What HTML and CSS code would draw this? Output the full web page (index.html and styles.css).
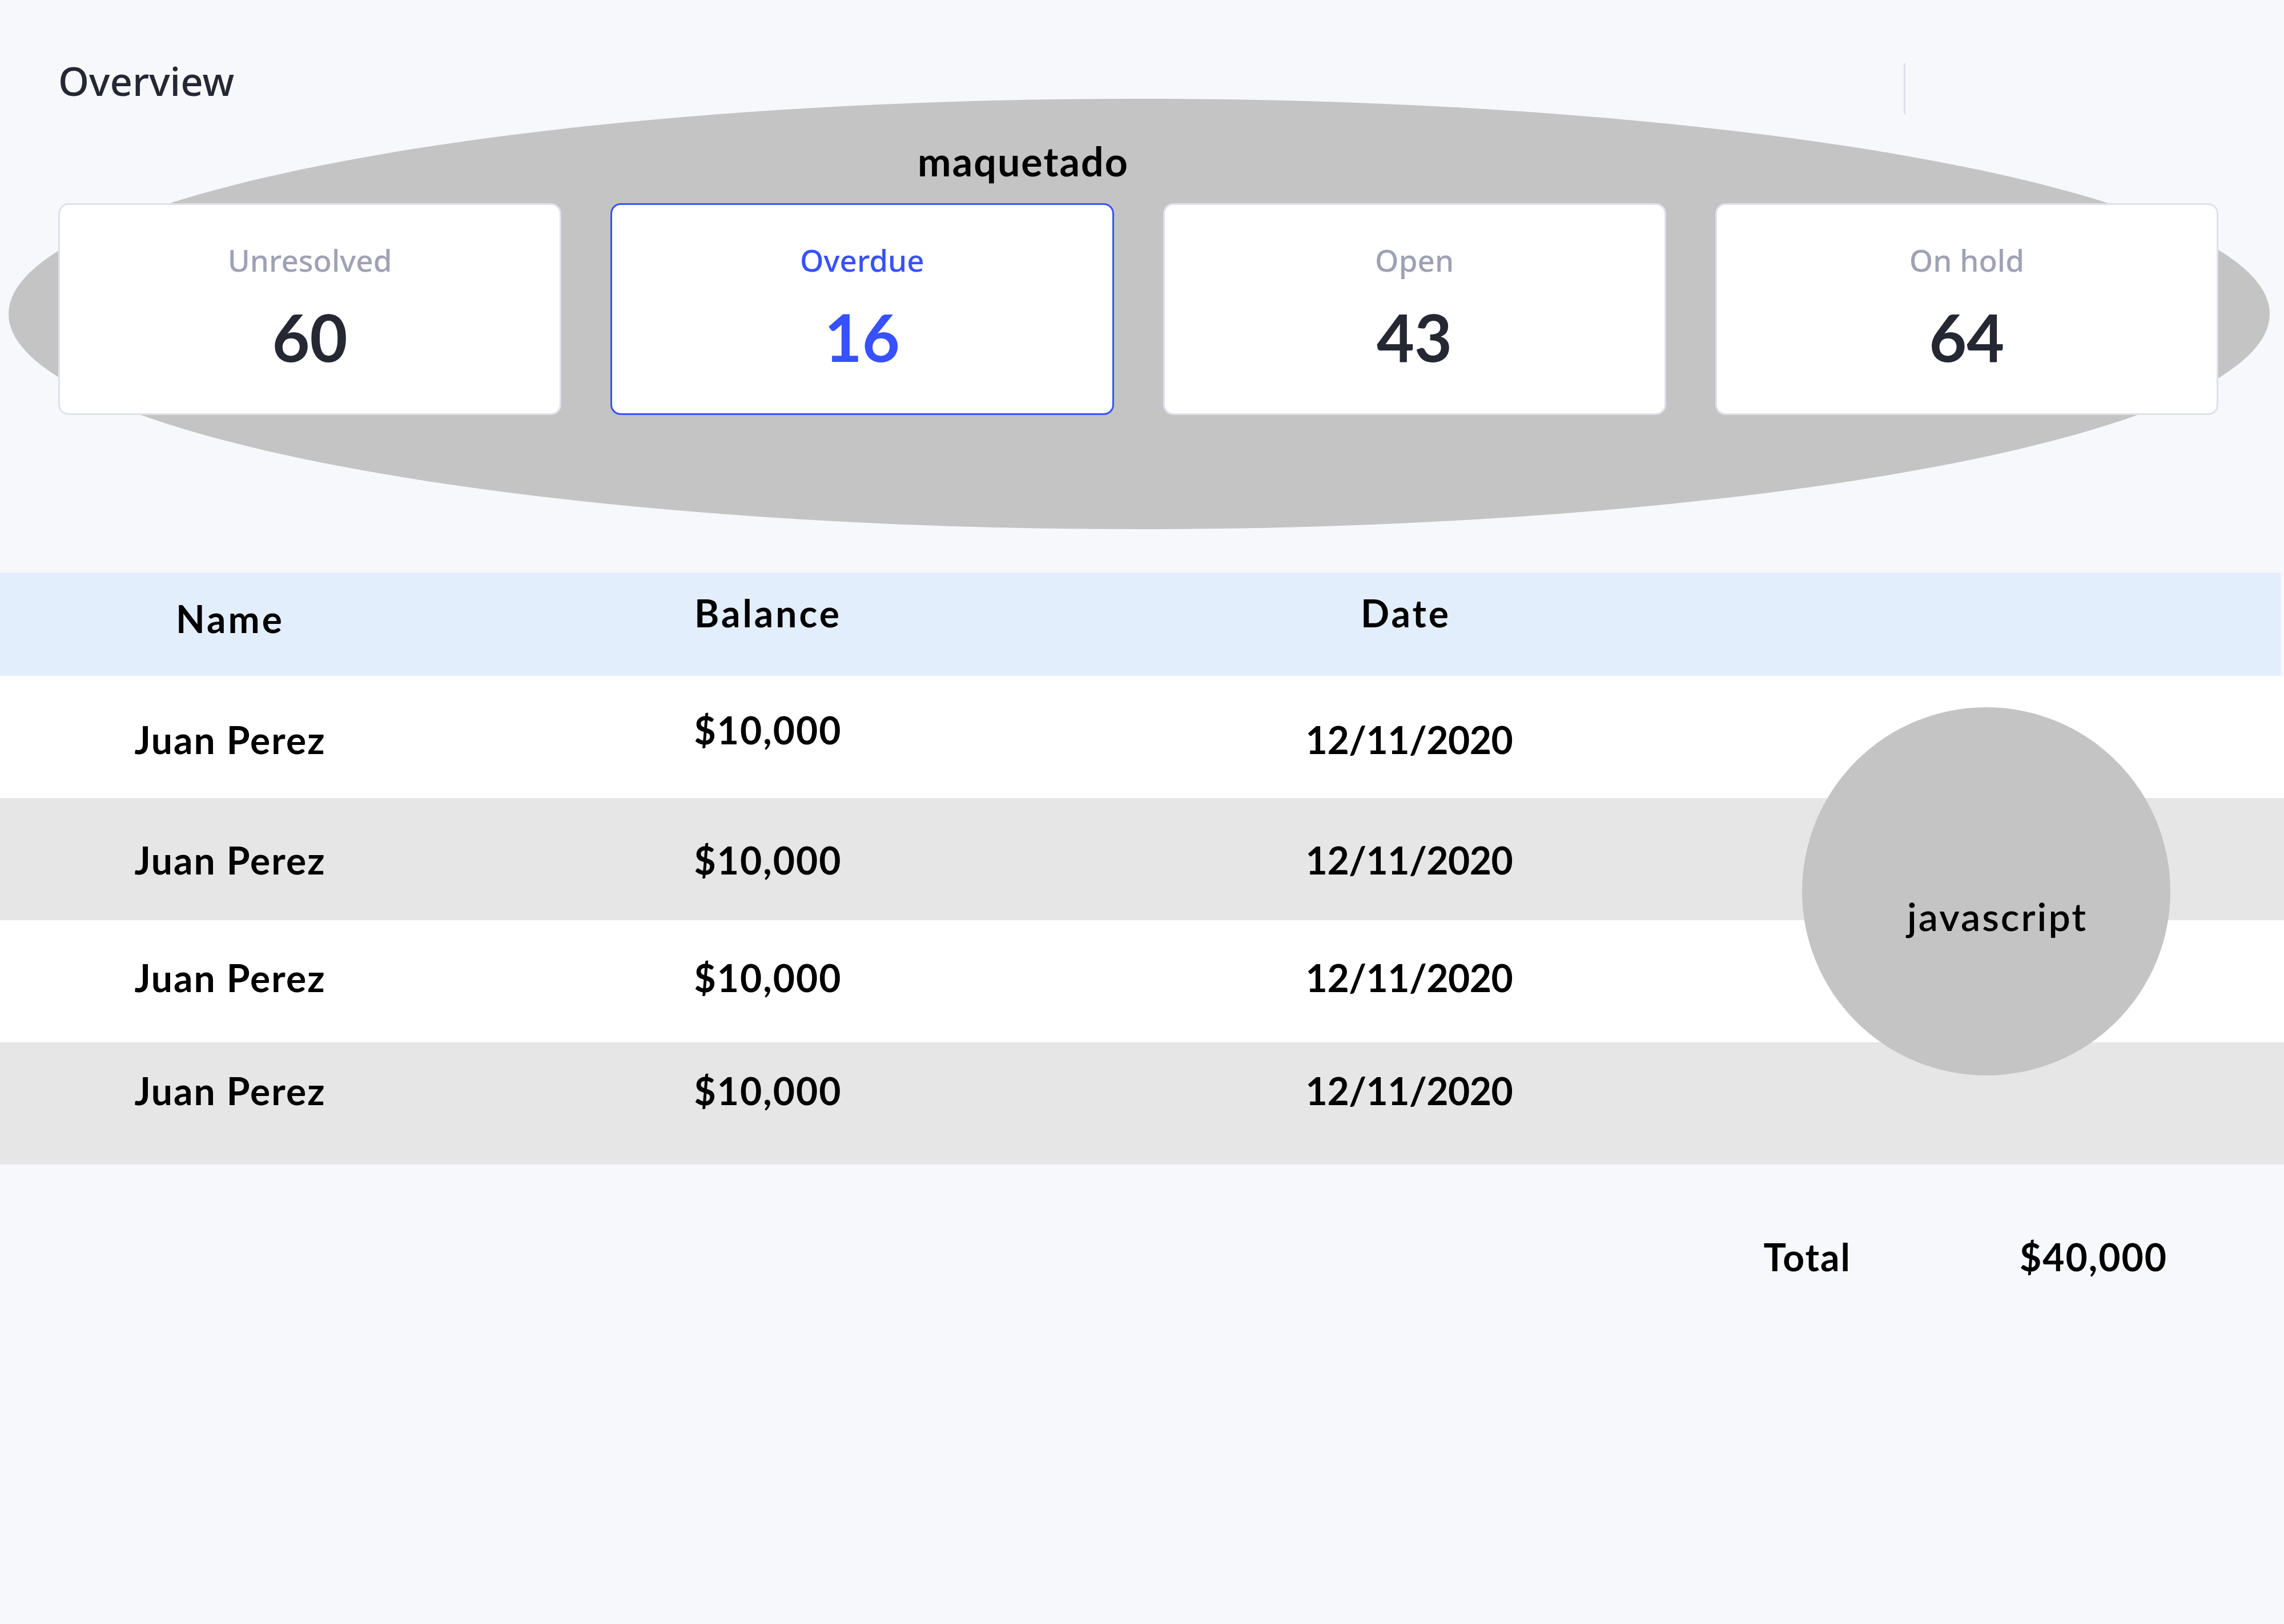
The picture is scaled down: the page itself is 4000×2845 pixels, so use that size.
FILE: index.html
```html
<!DOCTYPE html>
<html lang="es">
<head>
<meta charset="utf-8">
<title>Overview</title>
<link rel="stylesheet" href="styles.css">
</head>
<body>
<header class="topbar">
  <h1 class="title">Overview</h1>
  <span class="divider"></span>
</header>

<section class="blob">
  <h2 class="blob-label">maquetado</h2>
  <div class="cards">
    <div class="card">
      <div class="card-label">Unresolved</div>
      <div class="card-value">60</div>
    </div>
    <div class="card card-active">
      <div class="card-label">Overdue</div>
      <div class="card-value">16</div>
    </div>
    <div class="card">
      <div class="card-label">Open</div>
      <div class="card-value">43</div>
    </div>
    <div class="card">
      <div class="card-label">On hold</div>
      <div class="card-value">64</div>
    </div>
  </div>
</section>

<section class="table-wrap">
  <div class="thead">
    <div class="cell cell-name">Name</div>
    <div class="cell">Balance</div>
    <div class="cell">Date</div>
  </div>
  <div class="row">
    <div class="cell">Juan Perez</div>
    <div class="cell cell-up">$10,000</div>
    <div class="cell cell-date">12/11/2020</div>
  </div>
  <div class="row">
    <div class="cell">Juan Perez</div>
    <div class="cell">$10,000</div>
    <div class="cell cell-date">12/11/2020</div>
  </div>
  <div class="row">
    <div class="cell">Juan Perez</div>
    <div class="cell">$10,000</div>
    <div class="cell cell-date">12/11/2020</div>
  </div>
  <div class="row">
    <div class="cell">Juan Perez</div>
    <div class="cell">$10,000</div>
    <div class="cell cell-date">12/11/2020</div>
  </div>
  <div class="bubble"><span class="bubble-text">javascript</span></div>
</section>

<footer class="total">
  <span class="total-label">Total</span>
  <span class="total-value">$40,000</span>
</footer>
</body>
</html>
```

FILE: styles.css
```css
html, body {
  margin: 0;
  padding: 0;
}

body {
  background: #f7f8fc;
  width: 4000px;
  min-height: 2845px;
  font-family: "Lato", "Noto Sans", sans-serif;
  color: #000;
}

.topbar {
  display: flex;
  align-items: flex-start;
  box-sizing: border-box;
  height: 173px;
  padding: 100px 0 0 102px;
}

.title {
  margin: 0;
  font-family: "Noto Sans", sans-serif;
  font-weight: 500;
  font-size: 69px;
  line-height: 82px;
  color: #252733;
}

.divider {
  display: block;
  width: 3px;
  height: 89px;
  margin: 11px 663px 0 auto;
  background: #dfe0eb;
  flex: none;
}

.blob {
  box-sizing: border-box;
  width: 3960px;
  height: 754px;
  margin-left: 15px;
  padding: 67px 90px 0 87px;
  background: #c4c4c4;
  border-radius: 50%;
}

.blob-label {
  margin: 0 0 32px 1505px;
  font-size: 70px;
  line-height: 84px;
  font-weight: 700;
  letter-spacing: 2px;
  color: #000;
}

.cards {
  display: grid;
  grid-template-columns: repeat(4, 1fr);
  column-gap: 86px;
}

.card {
  box-sizing: border-box;
  height: 371px;
  padding-top: 61px;
  background: #fff;
  border: 3px solid #dfe0eb;
  border-radius: 18px;
  text-align: center;
}

.card-label {
  font-family: "Noto Sans", sans-serif;
  font-size: 53px;
  line-height: 72px;
  font-weight: 500;
  color: #9fa2b4;
}

.card-value {
  margin-top: 31px;
  font-size: 114px;
  line-height: 134px;
  font-weight: 700;
  color: #252733;
}

.card-active {
  border-color: #3751ff;
}

.card-active .card-label,
.card-active .card-value {
  color: #3751ff;
}

.table-wrap {
  position: relative;
  margin-top: 76px;
}

.thead,
.row {
  display: grid;
  grid-template-columns: 806px 1078px 1156px 1fr;
  box-sizing: border-box;
  font-size: 66px;
  line-height: 80px;
  font-weight: 700;
  letter-spacing: 2px;
}

.cell {
  text-align: center;
}

.thead {
  width: 3994px;
  height: 181px;
  padding-top: 31px;
  background: #e3eefd;
  letter-spacing: 4px;
}

.cell-name {
  margin-top: 10px;
}

.row {
  height: 214px;
  background: #fff;
}

.row:nth-of-type(2) { padding-top: 72px; }
.row:nth-of-type(3) { padding-top: 69px; background: #e6e6e6; }
.row:nth-of-type(4) { padding-top: 61px; }
.row:nth-of-type(5) { padding-top: 45px; background: #e6e6e6; }

.cell-up {
  margin-top: -17px;
}

.cell-date {
  letter-spacing: -0.5px;
  padding-left: 12px;
}

.bubble {
  position: absolute;
  left: 3156px;
  top: 236px;
  width: 645px;
  height: 645px;
  border-radius: 50%;
  background: #c4c4c4;
  box-sizing: border-box;
  padding: 325px 0 0 184px;
}

.bubble-text {
  display: block;
  font-size: 68px;
  line-height: 82px;
  font-weight: 600;
  letter-spacing: 3px;
  color: #000;
}

.total {
  display: flex;
  justify-content: flex-end;
  gap: 295px;
  padding-right: 204px;
  margin-top: 122px;
  font-size: 66px;
  line-height: 80px;
  font-weight: 700;
  letter-spacing: 2px;
}
```
